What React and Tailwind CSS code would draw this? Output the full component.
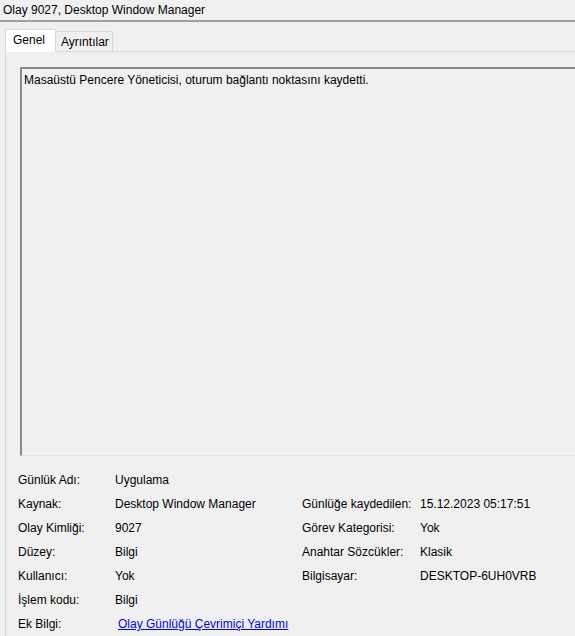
export default function App() {
  const left = [
    ['Günlük Adı:', 'Uygulama'],
    ['Kaynak:', 'Desktop Window Manager'],
    ['Olay Kimliği:', '9027'],
    ['Düzey:', 'Bilgi'],
    ['Kullanıcı:', 'Yok'],
    ['İşlem kodu:', 'Bilgi'],
  ];
  const right = [
    null,
    ['Günlüğe kaydedilen:', '15.12.2023 05:17:51'],
    ['Görev Kategorisi:', 'Yok'],
    ['Anahtar Sözcükler:', 'Klasik'],
    ['Bilgisayar:', 'DESKTOP-6UH0VRB'],
  ];

  return (
    <div className="w-[575px] h-[636px] overflow-hidden bg-[#f0f0f0] text-[12px] text-black font-['Liberation_Sans',Arial,sans-serif]">
      {/* title */}
      <div className="h-[20px] px-[3px] pt-[2px] leading-[16px]">Olay 9027, Desktop Window Manager</div>
      <div className="h-[2px] bg-[#a0a0a0]" />

      {/* tabs */}
      <div className="pl-[5px] pt-[6px] flex items-end h-[29px]">
        <div className="w-[51px] h-[23px] bg-white border border-b-0 border-[#d9d9d9] px-[7px] pt-[2px] leading-[16px] relative z-10 -mb-px">
          Genel
        </div>
        <div className="w-[57px] h-[20px] bg-[#f0f0f0] border border-l-0 border-b-0 border-[#d9d9d9] px-[5px] pt-[2px] leading-[16px]">
          Ayrıntılar
        </div>
      </div>

      {/* panel */}
      <div className="ml-[5px] border-t border-l border-[#d9d9d9] h-[600px] pl-[12px] pt-[15px]">
        <div className="ml-[2px] h-[389px] border-t-2 border-l-2 border-t-[#8a8a8a] border-l-[#8a8a8a] border-b border-b-[#e3e3e3] pl-[2px] pt-[3px] leading-[16px]">
          Masaüstü Pencere Yöneticisi, oturum bağlantı noktasını kaydetti.
        </div>

        <div className="flex pt-[16px]">
          <div className="w-[284px]">
            {left.map(([k, v]) => (
              <div key={k} className="flex h-[24px] leading-[16px]">
                <div className="w-[97px]">{k}</div>
                <div>{v}</div>
              </div>
            ))}
            <div className="flex h-[24px] leading-[16px]">
              <div className="w-[100px]">Ek Bilgi:</div>
              <div className="text-[#0000ff] underline">Olay Günlüğü Çevrimiçi Yardımı</div>
            </div>
          </div>
          <div>
            {right.map((r, i) =>
              r ? (
                <div key={r[0]} className="flex h-[24px] leading-[16px]">
                  <div className="w-[118px]">{r[0]}</div>
                  <div>{r[1]}</div>
                </div>
              ) : (
                <div key={i} className="h-[24px]" />
              )
            )}
          </div>
        </div>
      </div>
    </div>
  );
}
